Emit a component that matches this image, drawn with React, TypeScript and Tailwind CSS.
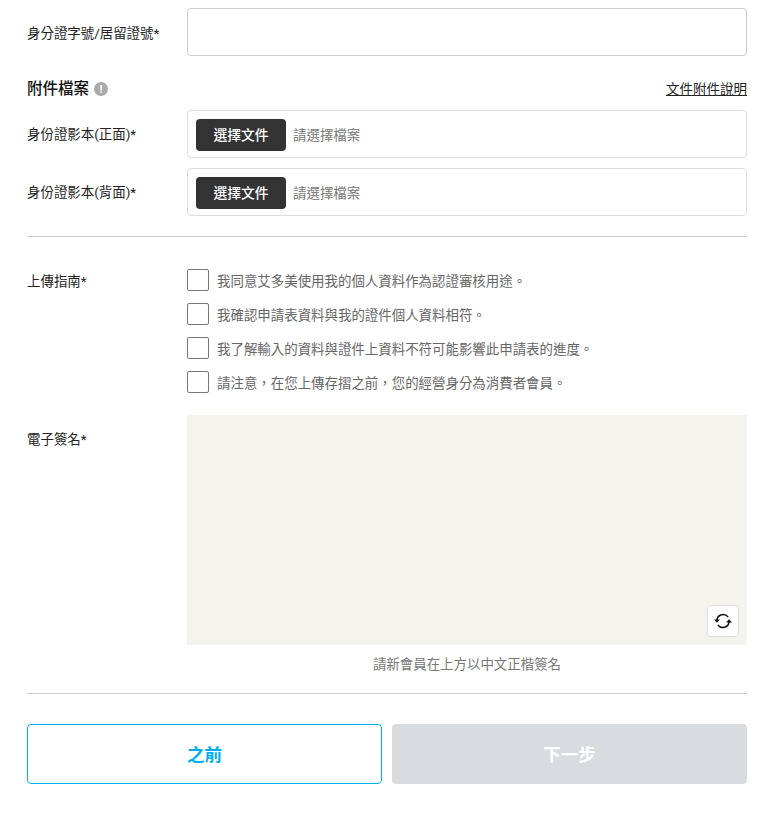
import React from "react";

const font = { fontFamily: '"Roboto", "Noto Sans CJK TC", sans-serif' };

function FileRow({ label }: { label: string }) {
  return (
    <div className="flex items-center">
      <label className="w-[160px] shrink-0 pt-[2px] text-[13.45px] leading-[20px] text-[#222222]">{label}</label>
      <div className="flex h-[48px] flex-1 items-center rounded-[4px] border border-[#dddddd] bg-white pl-[8px] pt-[2px]">
        <button className="h-[32px] w-[90px] rounded-[4px] bg-[#333333] pt-[1px] text-[13.8px] font-medium text-white">選擇文件</button>
        <span className="ml-[7px] pt-[2px] text-[13.45px] leading-[20px] text-[#777777]">請選擇檔案</span>
      </div>
    </div>
  );
}

function Check({ text }: { text: string }) {
  return (
    <div className="flex h-[22px] items-center">
      <span className="h-[22px] w-[22px] shrink-0 rounded-[2px] border border-[#777777] bg-white" />
      <span className="ml-[8px] pt-[4px] text-[13.45px] leading-[20px] text-[#666666]">{text}</span>
    </div>
  );
}

export default function App() {
  return (
    <div className="min-h-[818px] bg-white pl-[27px] pr-[32px] pt-[8px]" style={font}>
      <div className="flex items-center">
        <label className="w-[160px] shrink-0 pt-[3px] text-[13.45px] leading-[20px] text-[#222222]">身分證字號/居留證號*</label>
        <input className="h-[48px] flex-1 rounded-[4px] border border-[#cccccc] bg-white" />
      </div>

      <div className="mt-[22px] flex h-[20px] items-center justify-between pt-[2px]">
        <div className="flex items-center">
          <span className="text-[15.5px] font-medium leading-[20px] text-[#111111]">附件檔案</span>
          <span className="ml-[5px] flex h-[14px] w-[14px] items-center justify-center rounded-full bg-[#aaaaaa] text-[11px] font-bold leading-none text-white">!</span>
        </div>
        <a className="text-[13.5px] leading-[20px] text-[#222222] underline">文件附件說明</a>
      </div>

      <div className="mt-[12px] flex flex-col gap-[10px]">
        <FileRow label="身份證影本(正面)*" />
        <FileRow label="身份證影本(背面)*" />
      </div>

      <hr className="mt-[20px] border-t border-[#cccccc]" />

      <div className="mt-[32px] flex">
        <label className="w-[160px] shrink-0 pt-[3px] text-[13.45px] leading-[20px] text-[#222222]">上傳指南*</label>
        <div className="flex flex-col gap-[12px]">
          <Check text="我同意艾多美使用我的個人資料作為認證審核用途。" />
          <Check text="我確認申請表資料與我的證件個人資料相符。" />
          <Check text="我了解輸入的資料與證件上資料不符可能影響此申請表的進度。" />
          <Check text="請注意，在您上傳存摺之前，您的經營身分為消費者會員。" />
        </div>
      </div>

      <div className="mt-[22px] flex">
        <label className="w-[160px] shrink-0 pt-[15px] text-[13.45px] leading-[20px] text-[#222222]">電子簽名*</label>
        <div className="flex-1">
          <div className="relative h-[230px] bg-[#f4f4ec]">
            <button className="absolute bottom-[8px] right-[8px] flex h-[32px] w-[32px] items-center justify-center rounded-[4px] border border-[#dddddd] bg-white">
              <svg width="18" height="16" viewBox="0 0 16 14" fill="none">
                <path d="M2.6 6.2A5.5 5.5 0 0 1 12.6 3.6" stroke="#111" strokeWidth="1.3" />
                <path d="M13.4 7.8A5.5 5.5 0 0 1 3.4 10.4" stroke="#111" strokeWidth="1.3" />
                <path d="M0 5.6h5.2L2.6 8.6z" fill="#111" />
                <path d="M16 8.4h-5.2l2.6-3z" fill="#111" />
              </svg>
            </button>
          </div>
          <p className="mt-[10px] text-center text-[13.45px] leading-[20px] text-[#777777]">請新會員在上方以中文正楷簽名</p>
        </div>
      </div>

      <hr className="mt-[18px] border-t border-[#cccccc]" />

      <div className="mt-[30px] flex gap-[10px]">
        <button className="h-[60px] flex-1 rounded-[4px] border border-[#00aeef] bg-white pt-[3px] text-[17.5px] font-bold text-[#00aeef]">之前</button>
        <button className="h-[60px] flex-1 rounded-[4px] border border-[#d8dcdf] bg-[#d8dcdf] pt-[3px] text-[17.5px] font-bold text-white">下一步</button>
      </div>
    </div>
  );
}
